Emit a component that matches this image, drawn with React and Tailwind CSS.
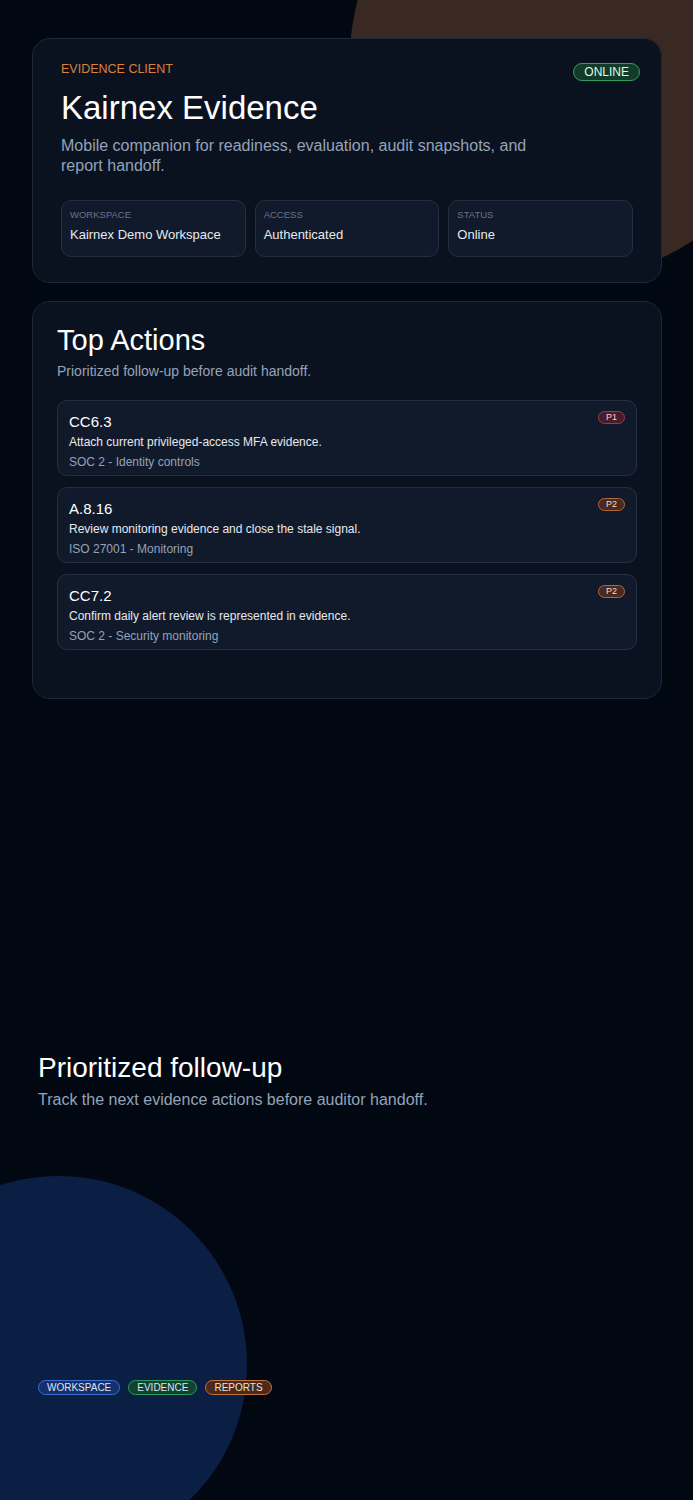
import React from "react";

const stats = [
  { label: "Workspace", value: "Kairnex Demo Workspace" },
  { label: "Access", value: "Authenticated" },
  { label: "Status", value: "Online" },
];

const actions = [
  {
    code: "CC6.3",
    text: "Attach current privileged-access MFA evidence.",
    meta: "SOC 2 - Identity controls",
    priority: "P1",
  },
  {
    code: "A.8.16",
    text: "Review monitoring evidence and close the stale signal.",
    meta: "ISO 27001 - Monitoring",
    priority: "P2",
  },
  {
    code: "CC7.2",
    text: "Confirm daily alert review is represented in evidence.",
    meta: "SOC 2 - Security monitoring",
    priority: "P2",
  },
];

const badgeStyles = {
  P1: "border-[#9b3a4a] bg-[#4a1a26] text-[#f3d3d9]",
  P2: "border-[#b4673a] bg-[#4a2a1c] text-[#f3dccb]",
};

function App() {
  return (
    <div className="relative min-h-[1500px] w-full overflow-hidden bg-[#020812] font-['Liberation_Sans',Arial,sans-serif]">
      {/* background blobs */}
      <div className="absolute left-[350px] top-[-162px] h-[440px] w-[440px] rounded-full bg-[#3a2822]" />
      <div className="absolute left-[-130px] top-[1176px] h-[377px] w-[377px] rounded-full bg-[#0b1f45]" />

      <div className="relative flex flex-col pl-8 pr-[31px] pt-[38px]">
        {/* Header card */}
        <section className="relative rounded-[18px] border border-[#1d2838] bg-[#0a1220] px-7 pt-[22px] pb-[25px]">
          <span className="absolute right-[21px] top-[24px] rounded-full border-[1.5px] border-[#2f9e62] bg-[#123b2a] px-[10px] text-[12px] leading-[16px] text-[#dcfce7]">
            ONLINE
          </span>
          <p className="text-[12.5px] leading-4 uppercase text-[#d9823f]">Evidence Client</p>
          <h1 className="mt-[11px] text-[33px] leading-10 text-white">Kairnex Evidence</h1>
          <p className="mt-2 max-w-[480px] text-[16px] leading-5 text-[#94a3b8]">
            Mobile companion for readiness, evaluation, audit snapshots, and report handoff.
          </p>
          <div className="mt-6 grid grid-cols-3 gap-[9px]">
            {stats.map((s) => (
              <div
                key={s.label}
                className="h-[57px] rounded-[10px] border border-[#243042] bg-[#111a2b] px-2 pt-2"
              >
                <p className="text-[9.5px] leading-3 uppercase text-[#64748b]">{s.label}</p>
                <p className="mt-[5px] text-[13px] leading-[18px] text-[#e5e9f0]">{s.value}</p>
              </div>
            ))}
          </div>
        </section>

        {/* Top actions */}
        <section className="mt-[18px] rounded-[18px] border border-[#1d2838] bg-[#0a1220] px-6 pt-[21px] pb-[48px]">
          <h2 className="text-[29px] leading-[34px] text-white">Top Actions</h2>
          <p className="mt-[5px] text-[14px] leading-[18px] text-[#94a3b8]">
            Prioritized follow-up before audit handoff.
          </p>
          <div className="mt-5 flex flex-col gap-[11px]">
            {actions.map((a) => (
              <div
                key={a.code}
                className="relative h-[76px] rounded-[10px] border border-[#243042] bg-[#111a2b] px-[11px] pt-[11px]"
              >
                <span
                  className={`absolute right-[11px] top-[10px] rounded-full border-[1.5px] px-[7px] text-[9px] leading-[11px] ${badgeStyles[a.priority]}`}
                >
                  {a.priority}
                </span>
                <p className="text-[15px] leading-5 text-white">{a.code}</p>
                <p className="mt-[1px] text-[12px] leading-[18px] text-[#e5e9f0]">{a.text}</p>
                <p className="mt-[2px] text-[12px] leading-[18px] text-[#94a3b8]">{a.meta}</p>
              </div>
            ))}
          </div>
        </section>
      </div>

      {/* Hero */}
      <div className="relative mt-[352px] px-[38px]">
        <h2 className="text-[28px] leading-[34px] text-white">Prioritized follow-up</h2>
        <p className="mt-[5px] text-[16px] leading-5 text-[#94a3b8]">
          Track the next evidence actions before auditor handoff.
        </p>
        <div className="mt-[270px] flex gap-2">
          <span className="rounded-full border-[1.5px] border-[#3b6fd1] bg-[#15306a] px-[8px] text-[10px] leading-[13px] text-[#dbe4f5]">
            WORKSPACE
          </span>
          <span className="rounded-full border-[1.5px] border-[#2e9d5b] bg-[#12422f] px-[8px] text-[10px] leading-[13px] text-[#dbe4f5]">
            EVIDENCE
          </span>
          <span className="rounded-full border-[1.5px] border-[#c4733a] bg-[#4a2a1c] px-[8px] text-[10px] leading-[13px] text-[#f0e0d4]">
            REPORTS
          </span>
        </div>
      </div>
    </div>
  );
}

export default App;
